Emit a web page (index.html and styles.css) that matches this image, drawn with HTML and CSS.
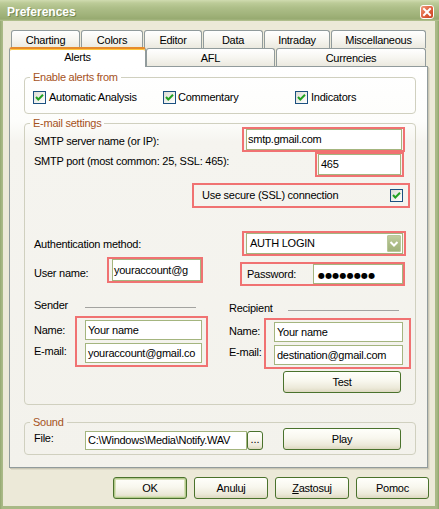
FILE: index.html
```html
<!DOCTYPE html>
<html>
<head>
<meta charset="utf-8">
<title>Preferences</title>
<link rel="stylesheet" href="styles.css">
</head>
<body>
<div class="window">
  <div class="titlebar">
    <span class="title">Preferences</span>
    <span class="close">
      <svg width="14" height="14" viewBox="0 0 14 14">
        <defs>
          <linearGradient id="cg" x1="0" y1="0" x2="1" y2="1">
            <stop offset="0" stop-color="#f0a283"/>
            <stop offset="0.5" stop-color="#e0603e"/>
            <stop offset="1" stop-color="#c8401f"/>
          </linearGradient>
        </defs>
        <rect x="0.5" y="0.5" width="13" height="13" rx="2.5" fill="url(#cg)" stroke="#fff" stroke-width="1"/>
        <path d="M4 4 L10 10 M10 4 L4 10" stroke="#fff" stroke-width="2" stroke-linecap="square"/>
      </svg>
    </span>
  </div>
  <div class="frame">
    <div class="tabrow row1">
      <div class="tab t-charting">Charting</div>
      <div class="tab t-colors">Colors</div>
      <div class="tab t-editor">Editor</div>
      <div class="tab t-data">Data</div>
      <div class="tab t-intraday">Intraday</div>
      <div class="tab t-misc">Miscellaneous</div>
    </div>
    <div class="tabrow row2">
      <div class="tab sel t-alerts">Alerts</div>
      <div class="tab t-afl">AFL</div>
      <div class="tab t-curr">Currencies</div>
    </div>
    <div class="panel">
      <fieldset class="group g-enable">
        <legend>Enable alerts from</legend>
        <div class="checks">
          <label class="check c1"><span class="cb"><svg width="11" height="11" viewBox="0 0 11 11"><path d="M2 5 L4.3 7.5 L9 2.8" fill="none" stroke="#21a121" stroke-width="2"/></svg></span>Automatic Analysis</label>
          <label class="check c2"><span class="cb"><svg width="11" height="11" viewBox="0 0 11 11"><path d="M2 5 L4.3 7.5 L9 2.8" fill="none" stroke="#21a121" stroke-width="2"/></svg></span>Commentary</label>
          <label class="check c3"><span class="cb"><svg width="11" height="11" viewBox="0 0 11 11"><path d="M2 5 L4.3 7.5 L9 2.8" fill="none" stroke="#21a121" stroke-width="2"/></svg></span>Indicators</label>
        </div>
      </fieldset>

      <fieldset class="group g-email">
        <legend>E-mail settings</legend>
        <div class="gbody">
          <div class="row r-server">
            <span class="lbl l-server">SMTP server name (or IP):</span>
            <div class="mark m-server"><div class="field f-server">smtp.gmail.com</div></div>
          </div>
          <div class="row r-port">
            <span class="lbl l-port">SMTP port (most common: 25, SSL: 465):</span>
            <div class="mark m-port"><div class="field f-port">465</div></div>
          </div>
          <div class="row r-ssl">
            <div class="mark m-ssl">
              <span>Use secure (SSL) connection</span>
              <span class="cb"><svg width="11" height="11" viewBox="0 0 11 11"><path d="M2 5 L4.3 7.5 L9 2.8" fill="none" stroke="#21a121" stroke-width="2"/></svg></span>
            </div>
          </div>
          <div class="row r-auth">
            <span class="lbl l-auth">Authentication method:</span>
            <div class="mark m-auth">
              <div class="combo">
                <span class="ctext">AUTH LOGIN</span>
                <span class="dd"><svg width="14" height="17" viewBox="0 0 14 17"><path d="M3.5 7 L7 10.5 L10.5 7" fill="none" stroke="#fff" stroke-width="2"/></svg></span>
              </div>
            </div>
          </div>
          <div class="row r-user">
            <span class="lbl l-user">User name:</span>
            <div class="mark m-user"><div class="field f-user">youraccount@g</div></div>
            <div class="mark m-pass">
              <span class="l-pass">Password:</span>
              <div class="field f-pass"><span class="dots">●●●●●●●●</span></div>
            </div>
          </div>
          <div class="cols">
            <div class="col col-s">
              <div class="heading"><span class="htxt">Sender</span><span class="hline"></span></div>
              <div class="block">
                <div class="blabels"><span>Name:</span><span>E-mail:</span></div>
                <div class="mark m-pair">
                  <div class="field pf">Your name</div>
                  <div class="field pf">youraccount@gmail.co</div>
                </div>
              </div>
            </div>
            <div class="col col-r">
              <div class="heading"><span class="htxt">Recipient</span><span class="hline"></span></div>
              <div class="block">
                <div class="blabels"><span>Name:</span><span>E-mail:</span></div>
                <div class="mark m-pair">
                  <div class="field pf">Your name</div>
                  <div class="field pf">destination@gmail.com</div>
                </div>
              </div>
              <div class="btn b-test">Test</div>
            </div>
          </div>
        </div>
      </fieldset>

      <fieldset class="group g-sound">
        <legend>Sound</legend>
        <div class="row r-sound">
          <span class="lbl l-file">File:</span>
          <div class="field f-file">C:\Windows\Media\Notify.WAV</div>
          <div class="btn b-dots">...</div>
          <div class="btn b-play">Play</div>
        </div>
      </fieldset>
    </div>
    <div class="buttons">
      <div class="btn b-ok">OK</div>
      <div class="btn">Anuluj</div>
      <div class="btn"><span><u>Z</u>astosuj</span></div>
      <div class="btn b-help">Pomoc</div>
    </div>
  </div>
</div>
</body>
</html>
```

FILE: styles.css
```css
html, body {
  margin: 0;
  padding: 0;
  background: #ffffff;
}
body {
  font-family: "Liberation Sans", Arial, sans-serif;
  font-size: 11px;
  line-height: 13px;
  letter-spacing: -0.25px;
  color: #000;
}

.window {
  width: 439px;
  height: 509px;
  display: flex;
  flex-direction: column;
  background: linear-gradient(90deg, #93a870 0, #a9b986 2px, #a9b986 437px, #8ea46a 439px);
  overflow: hidden;
}

.titlebar {
  height: 21px;
  flex: none;
  display: flex;
  align-items: flex-start;
  padding: 0 5px 0 7px;
  background: linear-gradient(180deg, #d0dbb0 0, #bccb98 3px, #adbe88 8px, #a2b47c 14px, #97aa70 19px, #b6c494 21px);
}
.title {
  flex: 1;
  padding-top: 5px;
  font: bold 12px/14px "Liberation Sans", Arial, sans-serif;
  letter-spacing: 0;
  color: #fff;
  text-shadow: 1px 1px 0 #76894f;
}
.close {
  margin-top: 5px;
  width: 14px;
  height: 14px;
  display: block;
}
.close svg { display: block; }

.frame {
  flex: 1;
  margin: 0 4px 3px 3px;
  background: #ece9d8;
  padding-top: 9px;
  display: flex;
  flex-direction: column;
}

/* tabs */
.tabrow {
  display: flex;
  height: 18px;
  flex: none;
  align-items: flex-start;
}
.row1 { margin-left: 8px; }
.row2 { margin-left: 6px; }
.tab {
  box-sizing: border-box;
  height: 18px;
  border: 1px solid #919b9c;
  border-bottom: none;
  border-radius: 3px 3px 0 0;
  background: linear-gradient(180deg, #ffffff 0, #f7f6f1 50%, #ebe9df 100%);
  text-align: center;
  padding-top: 3px;
  line-height: 13px;
  margin-right: 1px;
  flex: none;
}
.t-charting { width: 69px; }
.t-colors { width: 62px; }
.t-editor { width: 58px; }
.t-data { width: 60px; }
.t-intraday { width: 66px; }
.t-misc { width: 95px; }
.t-alerts { width: 137px; }
.t-afl { width: 129px; }
.t-curr { width: 150px; }
.row2 .tab { padding-top: 3px; }
.tab.sel {
  height: 20px;
  margin-top: -1px;
  margin-right: 0;
  border-top: 2px solid #e68b2c;
  background: #ffffff;
  position: relative;
  z-index: 1;
  padding-top: 2px;
  box-shadow: inset 0 1px 0 #ffc73c;
}

/* panel */
.panel {
  flex: none;
  margin-left: 6px;
  width: 419px;
  height: 402px;
  box-sizing: border-box;
  border: 1px solid #919b9c;
  background: linear-gradient(180deg, #ffffff 0, #fdfdfb 55px, #f5f4ef 75px, #f3f2ec 100%);
  padding-left: 14px;
  box-shadow: 1px 1px 0 #c9c6b4, 2px 2px 0 #dedbc9;
  display: flex;
  flex-direction: column;
}

.group {
  width: 392px;
  box-sizing: border-box;
  margin: 0;
  border: 1px solid #d0d0bf;
  border-radius: 4px;
  padding: 0 0 0 9px;
  min-inline-size: 0;
}
.group legend {
  padding: 0 3px;
  margin-left: -4px;
  color: #a5521c;
  line-height: 13px;
}

.g-enable {
  margin-top: 4px;
  padding-top: 7px;
  padding-bottom: 9px;
}
.checks {
  display: flex;
  margin-left: -1px;
}
.check {
  display: flex;
  align-items: center;
  gap: 3px;
  height: 13px;
}
.c1 { width: 130px; }
.c2 { width: 132px; gap: 2px; }

.cb {
  box-sizing: border-box;
  width: 13px;
  height: 13px;
  border: 1px solid #1c5180;
  background: linear-gradient(135deg, #dcdcd5 0, #f2f2ee 60%, #ffffff 100%);
  display: block;
  flex: none;
}
.cb svg { display: block; }

.g-email {
  margin-top: 3px;
  padding-bottom: 11px;
}
.gbody {
  display: flex;
  flex-direction: column;
}
.row {
  display: flex;
  align-items: flex-start;
}
.lbl { flex: none; }

.mark {
  box-sizing: border-box;
  border: 2px solid #f07272;
  display: flex;
  align-items: center;
  flex: none;
}
.field {
  box-sizing: border-box;
  background: #ffffff;
  border: 1px solid #a4b57f;
  height: 21px;
  padding: 0 1px;
  line-height: 19px;
  white-space: nowrap;
  overflow: hidden;
  flex: none;
}

.r-server { margin-top: -3px; }
.l-server { width: 208px; margin-top: 8px; }
.m-server { width: 163px; height: 25px; padding-left: 2px; }
.f-server { width: 156px; }

.l-port { width: 281px; margin-top: 3px; }
.m-port { width: 89px; height: 25px; padding-left: 1px; }
.f-port { width: 83px; padding-left: 2px; }

.r-ssl { margin-top: 6px; }
.m-ssl {
  margin-left: 158px;
  width: 218px;
  height: 25px;
  padding: 0 5px 0 8px;
  justify-content: space-between;
}

.r-auth { margin-top: 23px; }
.l-auth { width: 208px; margin-top: 7px; }
.m-auth { width: 164px; height: 25px; padding-left: 2px; }
.combo {
  box-sizing: border-box;
  width: 157px;
  height: 21px;
  border: 1px solid #a4b57f;
  background: #ffffff;
  display: flex;
  align-items: center;
  justify-content: space-between;
}
.ctext { padding-left: 3px; }
.dd {
  width: 14px;
  height: 17px;
  margin-right: 1px;
  border-radius: 2px;
  background: linear-gradient(180deg, #c4d0a2 0, #adbd88 50%, #9eb179 100%);
  box-shadow: inset 0 0 0 1px #b9c79a;
  display: block;
}
.dd svg { display: block; }

.r-user { margin-top: 1px; }
.l-user { width: 73px; margin-top: 10px; }
.m-user { width: 96px; height: 26px; padding-left: 3px; }
.f-user { width: 89px; height: 22px; line-height: 20px; padding-left: 1px; }
.m-pass {
  margin-left: 37px;
  margin-top: 5px;
  width: 165px;
  height: 24px;
  padding-left: 5px;
}
.l-pass { width: 66px; flex: none; }
.f-pass { width: 90px; height: 20px; line-height: 18px; padding-left: 4px; }
.dots {
  font-family: "DejaVu Sans", sans-serif;
  font-size: 8px;
  letter-spacing: 0.2px;
}

.cols { display: flex; align-items: flex-start; }
.col-s { width: 174px; flex: none; }
.col-r { margin-left: 21px; flex: none; display: flex; flex-direction: column; }
.heading { display: flex; align-items: flex-start; height: 13px; }
.col-s .heading { margin-top: 13px; }
.col-r .heading { margin-top: 16px; }
.htxt { flex: none; }
.col-s .htxt { width: 51px; }
.col-r .htxt { width: 59px; }
.hline {
  width: 111px;
  height: 1px;
  margin-top: 8px;
  background: #a3a3a0;
  flex: none;
}
.block { display: flex; }
.col-s .block { margin-top: 4px; }
.col-r .block { margin-top: 3px; }
.blabels { display: flex; flex-direction: column; flex: none; }
.blabels span { margin-top: 8px; }
.col-s .blabels { width: 41px; }
.col-r .blabels { width: 35px; }
.col-r .blabels span:first-child { margin-top: 7px; }
.m-pair {
  flex-direction: column;
  align-items: flex-start;
  gap: 3px;
  padding: 2px 4px 2px 8px;
}
.col-r .m-pair { padding-right: 6px; }
.pf { height: 20px; line-height: 18px; padding-left: 2px; }
.col-s .pf { width: 117px; }
.col-r .pf { width: 129px; }

/* buttons */
.btn {
  box-sizing: border-box;
  border: 1px solid #4a722c;
  border-radius: 3px;
  background: linear-gradient(180deg, #fffffb 0, #f8f7ee 45%, #ece9d9 80%, #ddd8c0 100%);
  display: flex;
  align-items: center;
  justify-content: center;
  line-height: 13px;
  height: 22px;
  width: 74px;
  flex: none;
}
.b-test { margin-left: 54px; margin-top: 2px; width: 118px; }

.g-sound {
  margin-top: 11px;
  padding-bottom: 4px;
}
.r-sound { margin-top: -1px; }
.l-file { width: 51px; margin-top: 4px; }
.f-file { width: 162px; height: 19px; line-height: 17px; margin-top: 3px; padding-left: 2px; }
.b-dots { width: 16px; height: 19px; margin-top: 3px; letter-spacing: 0; padding-bottom: 2px; }
.b-play { margin-left: 20px; width: 118px; }

.buttons {
  display: flex;
  gap: 7px;
  margin-top: 9px;
  margin-left: 110px;
}
.b-ok {
  box-shadow: inset 0 0 0 1px #b4c98c, inset 0 0 0 2px #d5e0b6;
}
.b-help { width: 73px; }
```
